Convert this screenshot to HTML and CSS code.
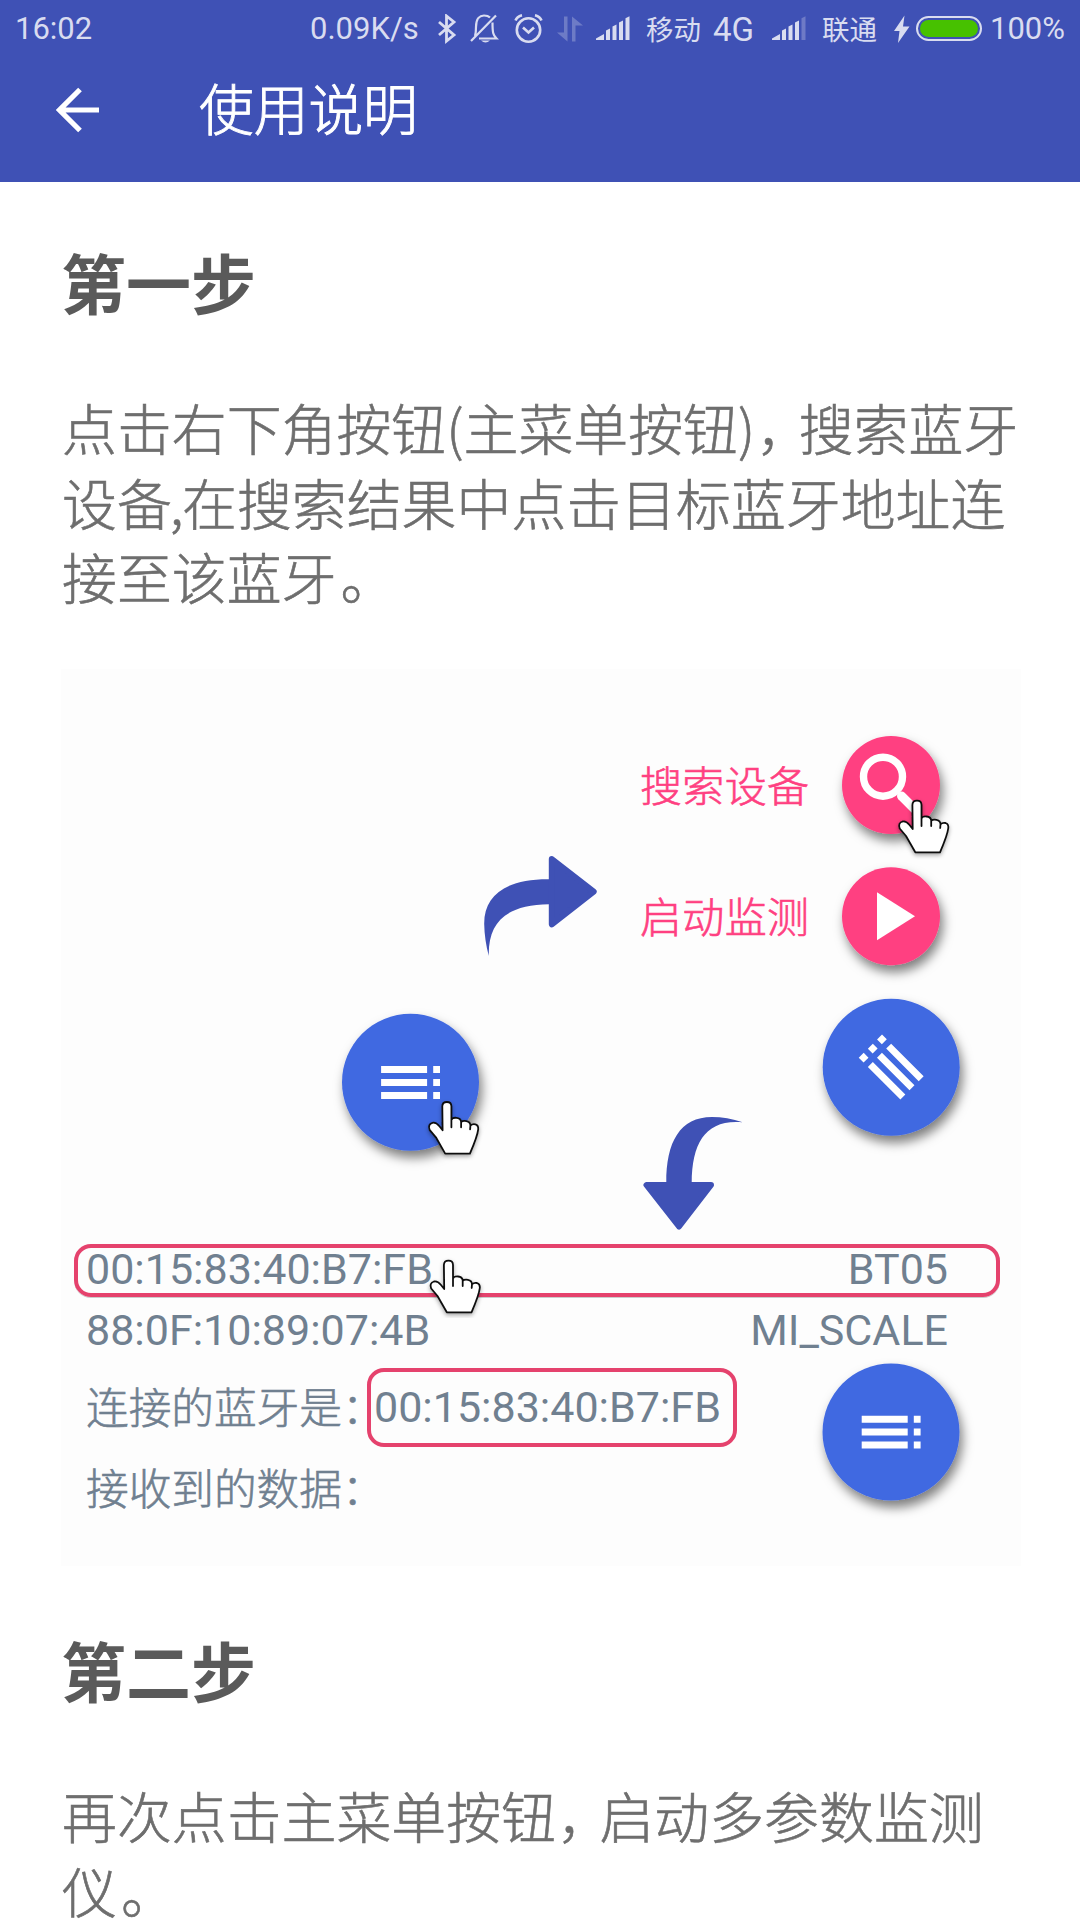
FILE: index.html
```html
<!DOCTYPE html>
<html lang="zh-CN">
<head>
<meta charset="utf-8">
<title>使用说明</title>
<link rel="stylesheet" href="styles.css">
</head>
<body>
<svg class="defs" width="0" height="0" aria-hidden="true">
  <defs>
    <g id="hand">
      <path d="M14.2 29 L13.9 5 Q14 .7 18.5 .7 Q23 .7 23 5 L23 26 V18.5 Q24 16.2 28 16.5 Q32.5 17 32.7 20.5 L32.7 26 V20.8 Q34 19.3 38 19.8 Q42 20.5 42 24.5 L41.7 28 L42 24.3 Q44 22.3 47 23 Q50.2 24 49.8 28 Q49 35 41.5 52.3 L16.8 52.3 L7.5 36 L1.2 28.5 Q-.8 23 4 21.5 Q7.5 20.7 11 25 Z" fill="#fff" stroke="#111" stroke-width="1.8" stroke-linejoin="round"/>
    </g>
    <g id="toc" fill="#fff">
      <path d="M-29.3 -16.3h46v7h-46z M-29.3 -3.4h46v7h-46z M-29.3 9.6h46v7h-46z M22.8 -16.3h6.8v7h-6.8z M22.8 -3.4h6.8v7h-6.8z M22.8 9.6h6.8v7h-6.8z"/>
    </g>
    <g id="bars">
      <path d="M0 24v-1.5L8 18v6z M10 14.5l4-2V24h-4z M16.5 10.5l4-2V24h-4z M23 6.500l4-2V24h-4z"/>
    </g>
    <filter id="fab-shadow" x="-30%" y="-30%" width="170%" height="170%">
      <feDropShadow dx="3" dy="7" stdDeviation="5.5" flood-color="#000" flood-opacity=".5"/>
    </filter>
    <filter id="hand-shadow" x="-30%" y="-30%" width="170%" height="170%">
      <feDropShadow dx="0" dy="2" stdDeviation="2" flood-color="#000" flood-opacity=".35"/>
    </filter>
  </defs>
</svg>

<header class="appbar">
  <div class="status">
    <span>16:02</span>
    <span>0.09K/s</span>
    <svg width="20" height="30" viewBox="0 0 20 30"><path d="M2 8l15 13-7.500 6V2l7.500 6L2 21" fill="none" stroke="currentColor" stroke-width="2.800"/></svg>
    <svg width="29" height="30" viewBox="0 0 29 30"><g fill="none" stroke="currentColor" stroke-width="2.200"><path d="M1 27L26 1.500M5 22c1-3 1-5 1-9C6 4 10 1.500 14 1.500c3 0 4.500.5 6 2M22.500 8.500c0 10 .5 12.500 4 16H9"/></g><path d="M11 26.500h9q-4.500 4-9 0z" fill="currentColor"/></svg>
    <svg width="30" height="30" viewBox="0 0 30 30"><g fill="none" stroke="currentColor" stroke-width="2.600"><circle cx="14.500" cy="16" r="11.700"/><path d="M9 13.500l5.500 5 5.500-5M1.500 6.500Q3 2.500 8 1.200M27.500 6.500Q26 2.500 21 1.200"/></g></svg>
    <svg class="dim" width="27" height="30" viewBox="0 0 27 30"><path d="M7 2.500h3.500V27.500L0 18.500h7z M15 27.500h3.500V11.500h7.500L15 2.500z" fill="currentColor"/></svg>
    <svg width="36" height="26" viewBox="0 0 36 26" fill="currentColor"><use href="#bars"/><path d="M29.500 2.300l4-2V24h-4z"/></svg>
    <span class="carrier">移动</span>
    <span class="net">4G</span>
    <svg width="36" height="26" viewBox="0 0 36 26" fill="currentColor"><use href="#bars"/><path class="dim" d="M29.500 2.300l4-2V24h-4z"/></svg>
    <span class="carrier">联通</span>
    <svg width="16" height="30" viewBox="0 0 16 30"><path d="M10.500 1.500L0 17h5.500L4 29 15.500 12.500H9z" fill="currentColor"/></svg>
    <span class="battery"><span class="charge"></span></span>
    <span>100%</span>
  </div>
  <div class="toolbar">
    <svg class="back" width="44" height="46" viewBox="0 0 44 46"><path d="M24 2.500L3.500 23 24 43.500M3 23H43" fill="none" stroke="#fff" stroke-width="5.200"/></svg>
    <h1 class="title">使用说明</h1>
  </div>
</header>

<main class="guide">
  <h2 class="step">第一步</h2>
  <p class="text">点击右下角按钮(主菜单按钮)<span class="wide-comma">，</span>搜索蓝牙<br>设备<span class="comma">,</span>在搜索结果中点击目标蓝牙地址连<br>接至该蓝牙<span class="stop">。</span></p>

  <figure class="demo">
    <svg class="flow" width="960" height="575" viewBox="61 669 960 575">
      <g class="label">
        <text x="640" y="801.500" textLength="169">搜索设备</text>
        <text x="640" y="933" textLength="169">启动监测</text>
      </g>
      <g fill="#ff4081" filter="url(#fab-shadow)">
        <circle cx="891" cy="785" r="49"/>
        <circle cx="891" cy="916.300" r="49"/>
      </g>
      <circle cx="883" cy="776.700" r="19.500" fill="none" stroke="#fff" stroke-width="7.400"/>
      <path d="M901.500 796L916 810.500" stroke="#fff" stroke-width="9" stroke-linecap="round"/>
      <path d="M877 892.300L915 916.300 877 940.300z" fill="#fff"/>

      <g fill="#3f51b5" stroke="#3f51b5" stroke-linejoin="round">
        <path d="M549 879.300C506 879 484 895 484.200 924Q484.500 940 488.800 956C488 922 506 905 549 904.300z" stroke="none"/>
        <path d="M551.800 859L593.700 891.600 551.800 924.300z" stroke-width="6"/>
        <path d="M666.300 1183C666 1142 680 1117 712 1117Q727 1117 742.700 1122.300C706 1119 692 1142 691.700 1183z" stroke="none"/>
        <path d="M646.500 1185H711L679 1226.500z" stroke-width="6"/>
      </g>

      <g fill="#4169e1" filter="url(#fab-shadow)">
        <circle cx="410.500" cy="1082.200" r="68.500"/>
        <circle cx="891.200" cy="1067.200" r="68.500"/>
      </g>
      <use href="#toc" transform="translate(410.400 1082.300)"/>
      <use href="#toc" transform="translate(891.200 1067.200) rotate(225)"/>
      <use href="#hand" transform="translate(898.500 800)" filter="url(#hand-shadow)"/>
      <use href="#hand" transform="translate(428.400 1101.300)" filter="url(#hand-shadow)"/>
    </svg>

    <div class="device device-picked"><span>00:15:83:40:B7:FB</span><span>BT05</span></div>
    <div class="device"><span>88:0F:10:89:07:4B</span><span>MI_SCALE</span></div>
    <div class="linked"><span class="caption">连接的蓝牙是：</span><span class="address">00:15:83:40:B7:FB</span></div>
    <div class="received"><span class="caption">接收到的数据：</span></div>

    <svg class="pointer" width="60" height="62" viewBox="-4 -4 60 62"><use href="#hand" filter="url(#hand-shadow)"/></svg>
    <svg class="fab" width="180" height="180" viewBox="-90 -90 180 180"><circle r="68.500" fill="#4169e1" filter="url(#fab-shadow)"/><use href="#toc"/></svg>
  </figure>

  <h2 class="step">第二步</h2>
  <p class="text">再次点击主菜单按钮<span class="wide-comma">，</span>启动多参数监测<br>仪<span class="stop">。</span></p>
</main>
</body>
</html>
```

FILE: styles.css
```css
* { box-sizing: border-box; }

html, body { height: 1920px; overflow: hidden; }

body {
  margin: 0;
  background: #fff;
  font-family: "Noto Sans CJK SC", sans-serif;
}

.defs { position: absolute; }

svg { display: block; }

/* App bar */
.appbar {
  height: 182px;
  background: #3f51b5;
}

.status {
  display: grid;
  grid-template-columns: 295px 127px 33px 44px 43px 39px 50px 67px 59px 50px 72px 22px 74px 77px;
  align-items: center;
  height: 55px;
  padding-left: 15px;
  color: #d9dcf0;
  font: 31px/55px Roboto, "Noto Sans CJK SC", sans-serif;
  white-space: nowrap;
}

.dim { opacity: .3; }

.carrier { font-size: 27.500px; font-family: "Noto Sans CJK SC", sans-serif; }

.net { font-size: 33px; padding-top: 2px; }

.battery {
  width: 66px;
  height: 25px;
  padding: 2px;
  border: 2px solid #d9dcf0;
  border-radius: 13px;
}

.charge {
  display: block;
  height: 17px;
  border-radius: 9px;
  background: #47c100;
}

.toolbar {
  display: flex;
  align-items: center;
  height: 110px;
  padding-left: 56px;
}

.title {
  margin: 0 0 6px 99px;
  color: #fff;
  font-size: 54.700px;
  font-weight: 300;
  line-height: 74px;
  -webkit-text-stroke: .9px #fff;
}

/* Guide */
.guide { padding: 62px 59px 0 61px; }

.step {
  margin: 0 0 70px;
  color: #5a5a5a;
  font-size: 65px;
  font-weight: 700;
  line-height: 75px;
}

.text {
  margin: 0 0 56px 1px;
  color: #6e6e6e;
  font-size: 54.900px;
  font-weight: 300;
  line-height: 74.670px;
  white-space: nowrap;
  -webkit-text-stroke: .6px #6e6e6e;
}

.comma { margin-left: -2px; letter-spacing: -1.500px; }
.wide-comma { margin-left: 1px; letter-spacing: -12.500px; }
.stop { margin-left: 4px; }

/* Demo picture */
.demo {
  position: relative;
  width: 960px;
  height: 897px;
  margin: 0 0 66px;
  background: #fdfdfd;
  color: #708090;
  font-size: 43px;
  font-family: Roboto, "Noto Sans CJK SC", sans-serif;
}

.label {
  fill: #ff4081;
  stroke: #ff4081;
  stroke-width: .6px;
  font-size: 42px;
  font-weight: 300;
  font-family: "Noto Sans CJK SC", sans-serif;
}

.device {
  display: flex;
  justify-content: space-between;
  height: 66px;
  padding: 0 73px 0 25px;
  line-height: 66px;
}

.device-picked {
  height: 53px;
  margin: 0 21px 0 13px;
  padding: 0 48px 0 8px;
  border: 4px solid #e5426d;
  border-radius: 17px;
  box-shadow: 0 1px 0 #ccc;
  line-height: 42px;
}

.linked {
  display: flex;
  align-items: center;
  height: 79px;
  margin-top: 5px;
  padding-left: 25px;
}

.caption {
  width: 281px;
  font: 300 42.670px/60px "Noto Sans CJK SC", sans-serif;
  white-space: nowrap;
  -webkit-text-stroke: .6px #708090;
  transform: translateY(-2px);
}

.address {
  width: 370px;
  height: 79px;
  padding-left: 3px;
  border: 4px solid #e5426d;
  border-radius: 17px;
  line-height: 70px;
}

.received {
  display: flex;
  align-items: center;
  height: 84px;
  padding-left: 25px;
}

.pointer { position: absolute; left: 365px; top: 587px; }

.fab { position: absolute; left: 740px; top: 672.500px; }
```
